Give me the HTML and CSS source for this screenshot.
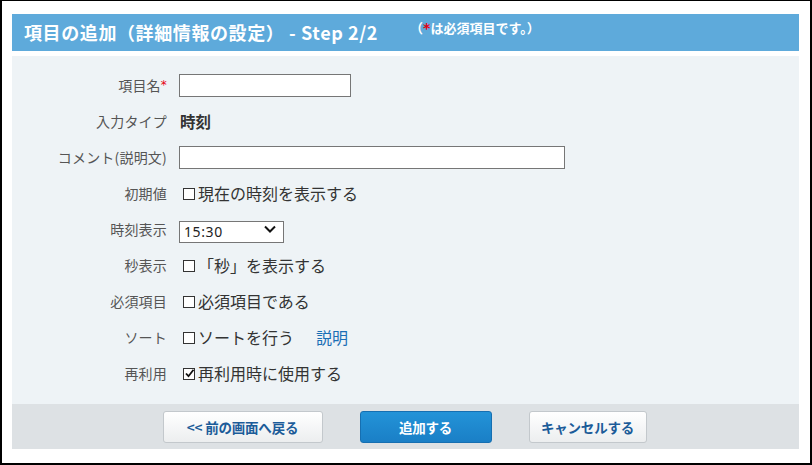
FILE: index.html
```html
<!DOCTYPE html>
<html lang="ja">
<head>
<meta charset="utf-8">
<link rel="stylesheet" href="styles.css">
</head>
<body>
<div class="frame">
  <div class="header">
    <span class="title">項目の追加（詳細情報の設定） - Step 2/2</span>
    <span class="note">（<span class="req">*</span>は必須項目です。）</span>
  </div>
  <div class="form">
    <div class="row">
      <div class="label">項目名<span class="req">*</span></div>
      <div class="value"><input class="text short" type="text"></div>
    </div>
    <div class="row">
      <div class="label">入力タイプ</div>
      <div class="value"><span class="strong">時刻</span></div>
    </div>
    <div class="row">
      <div class="label">コメント(説明文)</div>
      <div class="value"><input class="text long" type="text"></div>
    </div>
    <div class="row">
      <div class="label">初期値</div>
      <div class="value"><span class="cb"></span><span class="opt">現在の時刻を表示する</span></div>
    </div>
    <div class="row">
      <div class="label">時刻表示</div>
      <div class="value">
        <div class="selwrap">
          <select class="sel"><option>15:30</option></select>
          <svg class="chev" width="12" height="8" viewBox="0 0 12 8"><path d="M1 1.5 L6 6.5 L11 1.5" fill="none" stroke="#111" stroke-width="2"/></svg>
        </div>
      </div>
    </div>
    <div class="row">
      <div class="label">秒表示</div>
      <div class="value"><span class="cb"></span><span class="opt">「秒」を表示する</span></div>
    </div>
    <div class="row">
      <div class="label">必須項目</div>
      <div class="value"><span class="cb"></span><span class="opt">必須項目である</span></div>
    </div>
    <div class="row">
      <div class="label">ソート</div>
      <div class="value"><span class="cb"></span><span class="opt">ソートを行う</span><a class="link" href="#">説明</a></div>
    </div>
    <div class="row">
      <div class="label">再利用</div>
      <div class="value"><span class="cb checked"><svg width="11" height="11" viewBox="0 0 11 11"><path d="M2 5.5 L4.5 8.2 L9.5 1.8" fill="none" stroke="#111" stroke-width="1.8"/></svg></span><span class="opt">再利用時に使用する</span></div>
    </div>
  </div>
  <div class="footer">
    <button class="btn back">&lt;&lt;&nbsp;前の画面へ戻る</button>
    <button class="btn primary">追加する</button>
    <button class="btn cancel">キャンセルする</button>
  </div>
</div>
</body>
</html>
```

FILE: styles.css
```css
* { box-sizing: border-box; }
html, body { margin: 0; padding: 0; background: #fff; }
body {
  font-family: "Noto Sans CJK JP", "Noto Sans", sans-serif;
  color: #333;
}
.frame {
  width: 812px;
  height: 465px;
  border-style: solid;
  border-color: #000;
  border-width: 1px 2px 2px 2px;
  padding: 13px 11px 0 10px;
  background: #fff;
}
.header {
  height: 37px;
  background: #5eaadb;
  color: #fff;
  display: flex;
  align-items: flex-start;
  padding-left: 12px;
}
.title {
  font-size: 18px;
  font-weight: bold;
  line-height: 37px;
  letter-spacing: 0.6px;
}
.note {
  font-size: 13px;
  font-weight: bold;
  line-height: 14px;
  margin-left: 32px;
  margin-top: 7px;
  letter-spacing: 0;
}
.req {
  color: #e60012;
  font-family: "DejaVu Sans", sans-serif;
  font-weight: bold;
}
.note .req { font-size: 14px; }
.form {
  margin-top: 5px;
  height: 348px;
  background: #eef3f6;
  padding-top: 11px;
}
.row {
  display: grid;
  grid-template-columns: 155px 1fr;
  column-gap: 12px;
  height: 36px;
  align-items: center;
}
.label {
  text-align: right;
  font-size: 14px;
  color: #555;
  line-height: 20px;
  letter-spacing: 0.2px;
}
.label .req { font-size: 12px; vertical-align: 2px; font-weight: normal; }
.value {
  display: flex;
  align-items: center;
  font-size: 16px;
  color: #333;
}
.strong { font-weight: bold; font-size: 15.5px; margin-left: 1px; }
.text {
  height: 23px;
  border: 1px solid #767676;
  background: #fff;
  padding: 0 4px;
  font-size: 14px;
  outline: none;
}
.short { width: 172px; }
.long { width: 386px; }
.selwrap {
  position: relative;
  width: 105px;
  height: 22px;
}
.sel {
  appearance: none;
  -webkit-appearance: none;
  width: 105px;
  height: 22px;
  border: 1px solid #767676;
  background: #fff;
  border-radius: 0;
  font-family: "Noto Sans", "Noto Sans CJK JP", sans-serif;
  font-size: 14px;
  color: #222;
  padding: 0 0 0 4px;
  letter-spacing: 0.6px;
}
.chev {
  position: absolute;
  right: 8px;
  top: 7px;
  pointer-events: none;
}
.cb {
  display: inline-block;
  width: 12px;
  height: 12px;
  border: 1px solid #333;
  margin-left: 4px;
  margin-right: 3px;
  position: relative;
  top: 1px;
  background: #fff;
}
.cb svg { position: absolute; left: 0; top: -1px; }
.opt { line-height: 22px; }
.link {
  color: #1a6eb5;
  text-decoration: none;
  margin-left: 22px;
}
.footer {
  height: 45px;
  background: #dde1e4;
  display: flex;
  justify-content: center;
  align-items: flex-start;
  gap: 37px;
  padding-top: 7px;
  padding-right: 2px;
}
.btn {
  height: 32px;
  border-radius: 3px;
  font-family: "Noto Sans CJK JP", "Noto Sans", sans-serif;
  font-weight: bold;
  font-size: 13.5px;
  letter-spacing: -0.2px;
  cursor: pointer;
  padding: 0;
}
.back, .cancel {
  border: 1px solid #c3c8cc;
  background: linear-gradient(#ffffff, #eceeef);
  color: #1c5c99;
}
.back { width: 160px; }
.cancel { width: 118px; }
.primary {
  width: 132px;
  border: 1px solid #166fb1;
  background: linear-gradient(#2393d8, #1a7fc6);
  color: #fff;
}
```
